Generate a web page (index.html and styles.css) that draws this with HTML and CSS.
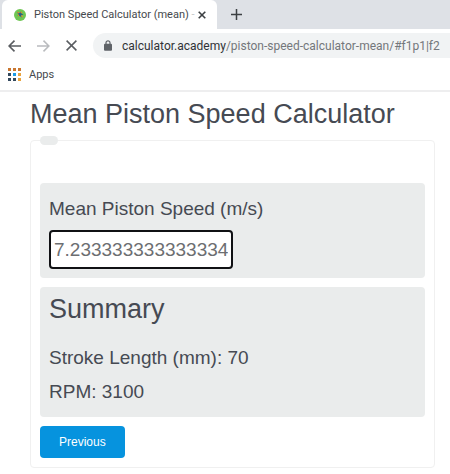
FILE: index.html
```html
<!DOCTYPE html>
<html lang="en">
<head>
    <meta charset="UTF-8">
    <meta name="viewport" content="width=device-width, initial-scale=1.0">
    <title>Piston Speed Calculator (mean)</title>
    <link rel="stylesheet" href="styles.css">
</head>
<body>
    <header class="browser">
        <div class="tab-strip">
            <div class="tab">
                <svg class="favicon" viewBox="0 0 12 12" aria-hidden="true">
                    <circle cx="6" cy="6" r="6" fill="#6fc653"/>
                    <path d="M3 3l2.500 1L7 2.500l.5 2L9.500 5.500 7 6.500l1 2-2.500-1.500L3.500 7l1-1.500z" fill="#2f5f86"/>
                    <path d="M3.500 3.200l1.500.8M7.500 6.500l1 1.500M6.800 2.800l.8 1.200M4 6.800l1-.8" stroke="#f08a24" stroke-width="1.200"/>
                </svg>
                <span class="tab-title">Piston Speed Calculator (mean) <span class="fade">-</span></span>
                <button class="icon-button" aria-label="Close tab">
                    <svg width="8" height="8" viewBox="0 0 8 8"><path d="M.7.7l6.600 6.600M7.300.7L.7 7.300" stroke="#3c4043" stroke-width="1.600"/></svg>
                </button>
            </div>
            <button class="icon-button new-tab" aria-label="New tab">
                <svg width="11" height="11" viewBox="0 0 11 11"><path d="M5.500 0v11M0 5.500h11" stroke="#3c4043" stroke-width="1.500"/></svg>
            </button>
        </div>
        <div class="toolbar">
            <button class="icon-button" aria-label="Back">
                <svg width="13" height="12" viewBox="0 0 13 12" fill="none" stroke="#5a5d61" stroke-width="1.600"><path d="M13 6H1.200M6.500.6L1.100 6l5.400 5.400"/></svg>
            </button>
            <button class="icon-button" aria-label="Forward">
                <svg width="13" height="12" viewBox="0 0 13 12" fill="none" stroke="#b9bbbe" stroke-width="1.500"><path d="M0 6h11.800M6.500.6L11.900 6l-5.400 5.400"/></svg>
            </button>
            <button class="icon-button" aria-label="Stop">
                <svg width="11" height="11" viewBox="0 0 11 11"><path d="M.6.600l9.800 9.800M10.400.6L.6 10.400" stroke="#5a5d61" stroke-width="1.500"/></svg>
            </button>
            <div class="address">
                <svg class="lock" viewBox="0 0 8 11" aria-hidden="true"><path d="M2 5V2.800a2 2 0 0 1 4 0V5" fill="none" stroke="#5f6368" stroke-width="1.200"/><rect y="3.800" width="8" height="7" rx="1" fill="#5f6368"/></svg>
                <span class="url"><span class="host">calculator.academy</span>/piston-speed-calculator-mean/#f1p1|f2</span>
            </div>
        </div>
        <div class="bookmarks">
            <svg width="13" height="13" viewBox="0 0 13 13" aria-hidden="true">
                <path d="M0 0h3v3H0zM5 0h3v3H5zM10 0h3v3h-3z" fill="#c9762f"/>
                <path d="M0 5h3v3H0zM0 10h3v3H0zM5 10h3v3H5z" fill="#34495e"/>
                <path d="M5 5h3v3H5z" fill="#1a9be8"/>
                <path d="M10 5h3v3h-3zM10 10h3v3h-3z" fill="#e8a33d"/>
            </svg>
            <span>Apps</span>
        </div>
    </header>
    <main class="page">
        <h1>Mean Piston Speed Calculator</h1>
        <form class="calculator">
            <span class="step"></span>
            <div class="panel">
                <label for="speed">Mean Piston Speed (m/s)</label>
                <input type="text" id="speed" value="7.233333333333334" readonly>
            </div>
            <div class="panel summary">
                <h2>Summary</h2>
                <p>Stroke Length (mm): 70</p>
                <p>RPM: 3100</p>
            </div>
            <button type="button" class="previous">Previous</button>
        </form>
    </main>
</body>
</html>
```
FILE: styles.css
```css
* {
    box-sizing: border-box;
}

body {
    margin: 0;
    background: #fff;
    color: #464a53;
    font-family: "Liberation Sans", Arial, sans-serif;
}

h1, h2, p {
    margin: 0;
    font-weight: normal;
}

/* Browser bar */
.browser {
    overflow: hidden;
    border-bottom: 2px solid #eeeeef;
    font-family: Roboto, "Open Sans", sans-serif;
    font-size: 11px;
    color: #46494d;
}

.icon-button {
    display: flex;
    padding: 0;
    border: none;
    background: none;
}

.tab-strip {
    display: flex;
    align-items: center;
    height: 29px;
    padding-left: 2px;
    background: #dee1e6;
}

.tab {
    display: flex;
    align-items: center;
    width: 215px;
    height: 29px;
    padding: 0 11px 0 12px;
    border-radius: 6px 6px 0 0;
    background: #fff;
}

.favicon {
    width: 12px;
    height: 12px;
    margin-right: 8px;
}

.tab-title {
    flex: 1;
    overflow: hidden;
    white-space: nowrap;
}

.fade {
    color: #c4c6c9;
}

.new-tab {
    margin-left: 14px;
}

.toolbar {
    display: flex;
    align-items: center;
    gap: 16px;
    height: 33px;
    padding-left: 8px;
}

.toolbar .icon-button {
    flex-shrink: 0;
}

.address {
    display: flex;
    flex: 1;
    align-items: center;
    gap: 10px;
    min-width: 0;
    height: 25px;
    padding-left: 11px;
    border-radius: 13px 0 0 13px;
    background: #f1f3f4;
    overflow: hidden;
}

.lock {
    flex-shrink: 0;
    width: 8px;
    height: 11px;
}

.url {
    font-size: 12px;
    color: #74777b;
    white-space: nowrap;
}

.host {
    color: #303236;
}

.bookmarks {
    display: flex;
    align-items: center;
    gap: 8px;
    height: 28px;
    padding: 0 8px 4px;
}

/* Calculator */
.page {
    padding: 6px 15px 6px 30px;
}

h1, h2 {
    font-size: 27px;
    line-height: 32px;
}

.calculator {
    position: relative;
    margin-top: 10px;
    padding: 42px 9px 9px;
    border: 1px solid #f0f0f0;
    border-radius: 4px;
}

.step {
    position: absolute;
    top: -5px;
    left: 9px;
    width: 18px;
    height: 9px;
    border-radius: 5px;
    background: #eaecec;
}

.panel {
    margin-bottom: 9px;
    padding: 14px 9px 9px;
    border-radius: 4px;
    background: #eaecec;
    font-size: 19px;
}

.panel label {
    display: block;
    margin-bottom: 9px;
    line-height: 24px;
}

.panel input {
    display: block;
    width: 184px;
    height: 39px;
    padding: 0 3px;
    border: 2px solid #101114;
    border-radius: 4px;
    background: #fff;
    color: #6c6e71;
    font-family: inherit;
    font-size: 19px;
}

.summary {
    padding: 6px 9px 8px;
}

.summary h2 {
    margin-bottom: 16px;
}

.summary p {
    line-height: 34px;
}

.previous {
    display: block;
    height: 32px;
    padding: 0 19px;
    border: none;
    border-radius: 4px;
    background: #0693de;
    color: #fff;
    font-family: inherit;
    font-size: 12px;
}
```
